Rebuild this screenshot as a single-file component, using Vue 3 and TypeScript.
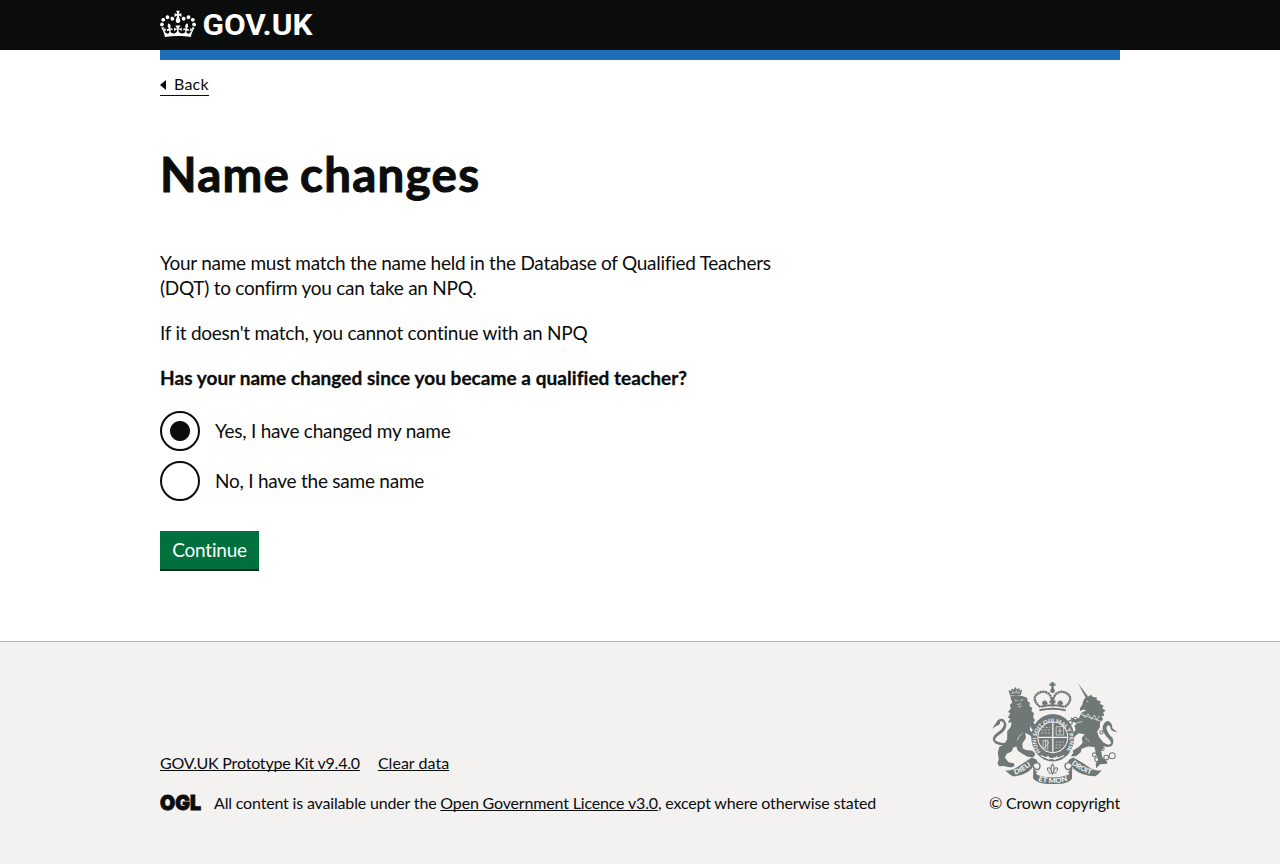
<script setup lang="ts">
import { ref } from 'vue'

interface Choice {
  value: string
  label: string
}

const choices: Choice[] = [
  { value: 'yes', label: 'Yes, I have changed my name' },
  { value: 'no', label: 'No, I have the same name' },
]

const answer = ref('yes')
</script>

<template>
  <div class="page">
    <header class="header">
      <div class="container header-inner">
        <a class="logo" href="#" aria-label="GOV.UK">
          <svg class="crown" viewBox="0 0 132 97" width="36" height="30" aria-hidden="true">
            <path
              fill="currentColor"
              fill-rule="evenodd"
              d="M25 30.2c3.5 1.5 7.7-.2 9.1-3.7 1.5-3.6-.2-7.8-3.9-9.2-3.6-1.4-7.6.3-9.1 3.9-1.4 3.5.3 7.5 3.9 9zM9 39.5c3.6 1.5 7.8-.2 9.2-3.7 1.5-3.6-.2-7.8-3.9-9.1-3.6-1.5-7.6.2-9.1 3.8-1.4 3.5.3 7.5 3.8 9zM4.4 57.2c3.5 1.5 7.7-.2 9.1-3.8 1.5-3.6-.2-7.7-3.9-9.1-3.5-1.5-7.6.3-9.1 3.8-1.4 3.5.3 7.6 3.9 9.1zm38.3-21.4c3.5 1.5 7.7-.2 9.1-3.8 1.5-3.6-.2-7.7-3.9-9.1-3.6-1.5-7.6.3-9.1 3.8-1.3 3.6.4 7.7 3.9 9.1zm64.4-5.6c-3.6 1.5-7.8-.2-9.1-3.7-1.5-3.6.2-7.8 3.8-9.2 3.6-1.4 7.7.3 9.2 3.9 1.3 3.5-.4 7.5-3.9 9zm15.9 9.3c-3.6 1.5-7.7-.2-9.1-3.7-1.5-3.6.2-7.8 3.7-9.1 3.6-1.5 7.7.2 9.2 3.8 1.5 3.5-.3 7.5-3.8 9zm4.7 17.7c-3.6 1.5-7.8-.2-9.2-3.8-1.5-3.6.2-7.7 3.9-9.1 3.6-1.5 7.7.3 9.2 3.8 1.3 3.5-.4 7.6-3.9 9.1zM89.3 35.8c-3.6 1.5-7.8-.2-9.2-3.8-1.4-3.6.2-7.7 3.9-9.1 3.6-1.5 7.7.3 9.2 3.8 1.4 3.6-.3 7.7-3.9 9.1zM69.7 17.7l8.9 4.7V9.3l-8.9 2.8c-.2-.3-.5-.6-.9-.9L72.4 0H59.6l3.5 11.2c-.3.3-.6.5-.9.9l-8.8-2.8v13.1l8.8-4.7c.3.3.6.7.9.9l-5 15.4v.1c-.2.8-.4 1.6-.4 2.4 0 4.1 3.1 7.5 7 8.1h.2c.3 0 .7.1 1 .1.4 0 .7 0 1-.1h.2c4-.6 7.1-4.1 7.1-8.1 0-.8-.1-1.7-.4-2.4V34l-5.1-15.4c.4-.2.7-.6 1-.9zM66 92.8c16.9 0 32.8 1.1 47.1 3.2 4-16.9 8.9-26.7 14-33.5l-9.6-3.4c1 4.9 1.1 7.2 0 10.2-1.5-1.4-3-4.3-4.2-8.7L108.6 76c2.8-2 5-3.2 7.5-3.3-4.4 9.4-10 11.9-13.6 11.2-4.3-.8-6.3-4.6-5.6-7.9 1-4.7 5.7-5.9 8-.5 4.3-8.7-3-11.4-7.6-8.8 7.1-7.2 7.9-13.5 2.1-21.1-8 6.1-8.1 12.3-4.5 20.8-4.7-5.4-12.1-2.5-9.5 6.2 3.4-5.2 7.9-2 7.2 3.1-.6 4.3-6.4 7.8-13.5 7.2-10.3-.9-10.9-8-11.2-13.8 2.5-.5 7.1 1.8 11 7.3L80.2 60c-4.1 4.4-8 5.3-12.3 5.4 1.4-4.4 8-11.6 8-11.6H55.5s6.4 7.2 7.9 11.6c-4.2-.1-8-1-12.3-5.4l1.4 16.4c3.9-5.5 8.5-7.7 10.9-7.3-.3 5.8-.9 12.8-11.1 13.8-7.2.6-12.9-2.9-13.5-7.2-.7-5 3.8-8.3 7.1-3.1 2.7-8.7-4.6-11.6-9.4-6.2 3.7-8.5 3.6-14.7-4.6-20.8-5.8 7.6-5 13.9 2.2 21.1-4.7-2.6-11.9.1-7.7 8.8 2.3-5.5 7.1-4.2 8.1.5.7 3.3-1.3 7.1-5.7 7.9-3.5.7-9-1.8-13.5-11.2 2.5.1 4.7 1.3 7.5 3.3l-4.7-15.4c-1.2 4.4-2.7 7.2-4.3 8.7-1.1-3-.9-5.3 0-10.2l-9.5 3.4c5 6.9 9.9 16.7 14 33.5 14.8-2.1 30.8-3.2 47.7-3.2z"
            />
          </svg>
          <svg class="wordmark" width="120" height="40" viewBox="0 0 120 40">
            <text x="0.5" y="26" textLength="110" lengthAdjust="spacingAndGlyphs" fill="currentColor">GOV.UK</text>
          </svg>
        </a>
      </div>
    </header>
    <div class="container bar"></div>

    <div class="container content">
      <a class="back" href="#"><span>Back</span></a>
      <main>
        <h1>Name changes</h1>
        <p class="body">Your name must match the name held in the Database of Qualified Teachers (DQT) to confirm you can take an NPQ.</p>
        <p class="body">If it doesn't match, you cannot continue with an NPQ</p>
        <form @submit.prevent>
          <fieldset>
            <legend>Has your name changed since you became a qualified teacher?</legend>
            <label v-for="choice in choices" :key="choice.value" class="choice">
              <input v-model="answer" type="radio" name="changed-name" :value="choice.value" />
              <span>{{ choice.label }}</span>
            </label>
          </fieldset>
          <button type="submit">Continue</button>
        </form>
      </main>
    </div>

    <footer class="footer">
      <div class="container footer-inner">
        <div class="meta">
          <div class="links">
            <a class="kit" href="#">GOV.UK Prototype Kit v9.4.0</a>
            <a class="clear" href="#">Clear data</a>
          </div>
          <div class="licence">
            <svg class="ogl" width="41" height="17" viewBox="0 0 41 17">
              <text x="0" y="16" textLength="41" lengthAdjust="spacingAndGlyphs">OGL</text>
            </svg>
            <span class="licence-text">All content is available under the <a href="#">Open Government Licence v3.0</a>, except where otherwise stated</span>
          </div>
        </div>
        <a class="copyright" href="#">
          <svg class="arms" viewBox="38 37 372 304" width="125" height="102" aria-hidden="true">
            <defs>
              <path id="garter" d="M183 245A50 52 0 1 1 256 245" />
              <path id="motto-left" d="M106 313Q134 304 160 281" />
              <path id="motto-mid" d="M175 331Q218 346 264 331" />
              <path id="motto-right" d="M274 281Q302 304 337 314" />
            </defs>
            <!-- royal crown -->
            <g class="line">
              <path d="M182 112Q156 91 170 75Q188 59 207 72Q218 84 218 109Q218 84 229 72Q248 59 266 75Q280 91 254 112" stroke-width="7" stroke-dasharray="7 1" />
              <path d="M218 37V65M209 45H227" stroke-width="7" />
              <path d="M183 111Q218 102 253 111M179 121Q218 112 257 121" stroke-width="6" />
              <path d="M195 109V92M187 100H203M218 104V86M209 96H227M241 109V92M233 100H249" stroke-width="8" />
            </g>
            <circle cx="218" cy="63" r="7" />
            <!-- lion -->
            <path d="M91 77L87 61L94 64L97 56L103 60L107 51L112 59L119 55L121 62L127 59L124 76Z" />
            <path class="cut" d="M95 71Q107 66 121 70M98 63L101 67M110 61V66M119 62L116 66" />
            <path d="M92 80Q108 73 128 79L142 84L144 94L151 99L149 108L158 115L155 123L163 131L160 141L166 151L161 157L171 171L168 181L157 178L151 169L151 182L166 191L168 201L158 205L153 197L137 188L139 203L128 221L130 235L139 240L158 242L167 251L162 261L144 260L128 251L115 242L110 229L101 232L96 244L82 251L76 262L87 276L103 279L105 287L94 292L72 287L59 288L54 279L58 268L55 249L59 231L75 222L83 207L83 184L94 170L96 158L85 158L92 146L85 143L92 131L86 126L94 116L91 105L98 99Z" />
            <path d="M85 216Q63 224 46 210Q48 201 67 189Q83 178 80 161Q75 145 63 147Q51 150 51 158Q43 165 39 180Q43 169 58 165Q64 159 61 154Q76 153 72 168Q67 180 49 191Q31 207 48 220Q68 229 86 224Z" />
            <path class="cut" d="M105 91L114 93M122 92L131 90M113 104L124 102M116 110L122 112L126 107M84 257L95 250M129 189Q116 198 113 211" />
            <!-- unicorn -->
            <path d="M294 41L324 80L317 84Z" />
            <path d="M315 84L328 79L333 74L337 81L351 84L349 90L362 95L359 102L371 108L366 115L376 122L369 129L373 137L364 140L369 148L360 157L359 172L351 185L357 202L368 215L371 232L363 243L367 263L381 274L381 281L360 282L348 294L347 279L356 268L348 252L343 231L324 229L305 236L302 246L288 258L273 258L280 248L278 242L297 230L308 218L305 204L314 193L296 190L279 204L272 194L289 179L283 168L291 160L275 155L272 142L287 149L298 143L304 129L319 121L309 119L302 124L299 116L307 105L309 94Z" />
            <path class="cut" d="M302 133L362 154M306 130L315 143L324 132L334 148L343 135L350 151L358 138M319 94L325 95M315 203L328 214M290 158L307 155" />
            <path d="M368 216Q390 232 393 217Q389 209 378 199Q363 182 369 166Q379 147 390 157Q398 165 396 174L411 187Q388 184 390 168Q379 164 379 176Q384 193 396 202Q403 214 395 227Q380 236 365 224Z" />
            <g class="line" stroke-width="3">
              <circle cx="271" cy="158" r="6" /><circle cx="286" cy="147" r="5" /><circle cx="292" cy="177" r="5" />
              <circle cx="364" cy="187" r="5" /><circle cx="367" cy="236" r="5" />
              <circle cx="343" cy="254" r="6" /><circle cx="350" cy="268" r="6" />
              <circle cx="363" cy="269" r="6" /><circle cx="378" cy="262" r="7" /><circle cx="396" cy="257" r="9" />
            </g>
            <!-- shield and garter -->
            <ellipse cx="219" cy="203" rx="64" ry="71" />
            <text class="garter-text"><textPath href="#garter" textLength="232" lengthAdjust="spacingAndGlyphs">HONI SOIT QUI MAL Y PENSE</textPath></text>
            <ellipse class="pale" cx="219" cy="202" rx="46" ry="47" />
            <ellipse cx="219" cy="202" rx="43" ry="44" />
            <g class="cut">
              <path d="M219 158V246M176 202H262" stroke-width="4" />
              <path d="M184 180H210M184 189H212M188 172H211M228 216H252M227 225H249M227 233H242" stroke-dasharray="6 4" />
              <path d="M229 170H251V195H229ZM240 174V192M234 183H246" />
              <path d="M190 209V235M197 208V237M204 208V240M190 212Q202 210 207 217L192 237" />
              <path d="M183 256Q218 276 253 256M204 258L207 269M231 258L226 269" stroke-width="3" />
            </g>
            <circle class="pale" cx="204" cy="262" r="4" /><circle class="pale" cx="224" cy="265" r="4" />
            <!-- motto scrolls -->
            <path d="M77 300Q95 304 116 288Q142 272 156 262L170 268Q178 279 163 283L155 296Q133 317 99 318Q87 311 77 300Z" />
            <path d="M365 300Q344 304 323 288Q299 272 280 262L268 268Q260 279 273 283L281 296Q305 317 346 318Q356 311 365 300Z" />
            <path d="M161 293L173 307Q164 308 174 314Q218 329 264 314Q272 308 263 307L277 291L276 325Q266 341 218 342Q171 341 160 324Z" />
            <path class="line" d="M159 285Q163 298 176 298Q184 290 179 281L168 274M278 285Q273 298 261 298Q252 290 257 281L269 274" stroke-width="4" />
            <path class="line" d="M218 281Q209 292 218 312Q227 292 218 281M214 303Q212 289 203 294Q202 303 209 303M222 303Q224 289 233 294Q234 303 227 303M206 308H230" stroke-width="3" />
            <text class="motto"><textPath href="#motto-left" textLength="56" lengthAdjust="spacingAndGlyphs">DIEU</textPath></text>
            <text class="motto"><textPath href="#motto-mid" textLength="90" lengthAdjust="spacingAndGlyphs">ET MON</textPath></text>
            <text class="motto"><textPath href="#motto-right" textLength="66" lengthAdjust="spacingAndGlyphs">DROIT</textPath></text>
          </svg>
          <span class="crown-copyright">© Crown copyright</span>
        </a>
      </div>
    </footer>
  </div>
</template>

<style>
html,
body {
  margin: 0;
  background: #f3f2f1;
}
</style>

<style scoped>
.page {
  min-height: 864px;
  box-sizing: border-box;
  display: flex;
  flex-direction: column;
  background: #fff;
  color: #0b0c0c;
  font-family: Lato, 'Liberation Sans', sans-serif;
  font-size: 19px;
  line-height: 25px;
}
a {
  color: inherit;
}
.container {
  width: 960px;
  margin: 0 auto;
}
.header {
  height: 50px;
  background: #0b0c0c;
  color: #fff;
}
.logo {
  display: flex;
  padding-top: 9px;
  text-decoration: none;
}
.crown {
  margin-right: 6px;
}
.wordmark text {
  font-family: Roboto, sans-serif;
  font-size: 29px;
  font-weight: 700;
}
.bar {
  height: 10px;
  background: #1d70b8;
}
.content {
  height: 581px;
}
.back {
  display: inline-flex;
  align-items: center;
  margin-top: 15px;
  height: 20px;
  border-bottom: 1px solid #0b0c0c;
  font-size: 16px;
  line-height: 18px;
  letter-spacing: 0.2px;
  text-decoration: none;
  vertical-align: top;
}
.back span {
  padding-bottom: 2px;
}
.back::before {
  content: '';
  margin-right: 8px;
  border: 5px solid transparent;
  border-right: 6px solid #0b0c0c;
  border-left: 0;
}
main {
  width: 630px;
  padding-top: 53px;
}
h1 {
  margin: 0 0 51px;
  font-size: 47.5px;
  line-height: 50px;
  font-weight: 700;
  letter-spacing: 1.25px;
  word-spacing: -3px;
  -webkit-text-stroke: 1px #0b0c0c;
}
.body {
  margin: 0 0 20px;
  letter-spacing: -0.26px;
}
fieldset {
  display: flex;
  flex-direction: column;
  gap: 10px;
  margin: 0 0 30px;
  padding: 0;
  border: 0;
}
legend {
  margin-bottom: 21px;
  padding: 0;
  font-weight: 700;
  letter-spacing: 0.05px;
  -webkit-text-stroke: 0.3px #0b0c0c;
}
.choice {
  display: flex;
  align-items: center;
  gap: 15px;
  height: 40px;
  letter-spacing: -0.24px;
}
.choice span {
  padding-bottom: 2px;
}
.choice input {
  appearance: none;
  box-sizing: border-box;
  width: 40px;
  height: 40px;
  margin: 0;
  border: 2px solid #0b0c0c;
  border-radius: 50%;
  background: #fff;
}
.choice input:checked {
  background: radial-gradient(circle, #0b0c0c 9.5px, #fff 10.5px);
}
button {
  display: block;
  width: 99px;
  height: 38px;
  padding: 0 0 2px;
  border: 0;
  background: #00703c;
  box-shadow: 0 2px 0 #002d18;
  color: #fff;
  font: inherit;
  letter-spacing: -0.2px;
}
.footer {
  flex: 1;
  border-top: 1px solid #b1b4b6;
  background: #f3f2f1;
  font-size: 16px;
  line-height: 20px;
}
.footer a {
  text-decoration-thickness: 1px;
  text-underline-offset: 1px;
  text-decoration-skip-ink: none;
}
.footer-inner {
  display: flex;
  justify-content: space-between;
  align-items: flex-end;
  padding-top: 40px;
}
.links {
  display: flex;
  gap: 18px;
  margin-bottom: 20px;
}
.meta {
  padding-bottom: 1px;
}
.kit {
  letter-spacing: -0.2px;
}
.clear {
  letter-spacing: 0.03px;
}
.licence {
  display: flex;
  align-items: flex-start;
}
.ogl {
  overflow: visible;
  margin: 1px 13px 0 0;
  fill: #0b0c0c;
  stroke: #0b0c0c;
  stroke-width: 0.9;
  font-family: Inter, sans-serif;
  font-size: 20.5px;
  font-weight: 900;
}
.licence-text {
  letter-spacing: -0.167px;
}
.footer .copyright {
  display: flex;
  flex-direction: column;
  align-items: flex-end;
  text-decoration: none;
}
.arms {
  margin: 0 3px 9px 0;
  fill: #6f7777;
}
.crown-copyright {
  padding-bottom: 1px;
  letter-spacing: -0.19px;
}
.line {
  fill: none;
  stroke: #6f7777;
}
.cut {
  fill: none;
  stroke: #f3f2f1;
  stroke-width: 2;
}
.pale {
  fill: #f3f2f1;
}
.garter-text,
.motto {
  fill: #f3f2f1;
  font-family: Lato, sans-serif;
  font-size: 16px;
  font-weight: 900;
}
.motto {
  font-size: 21px;
}
</style>
